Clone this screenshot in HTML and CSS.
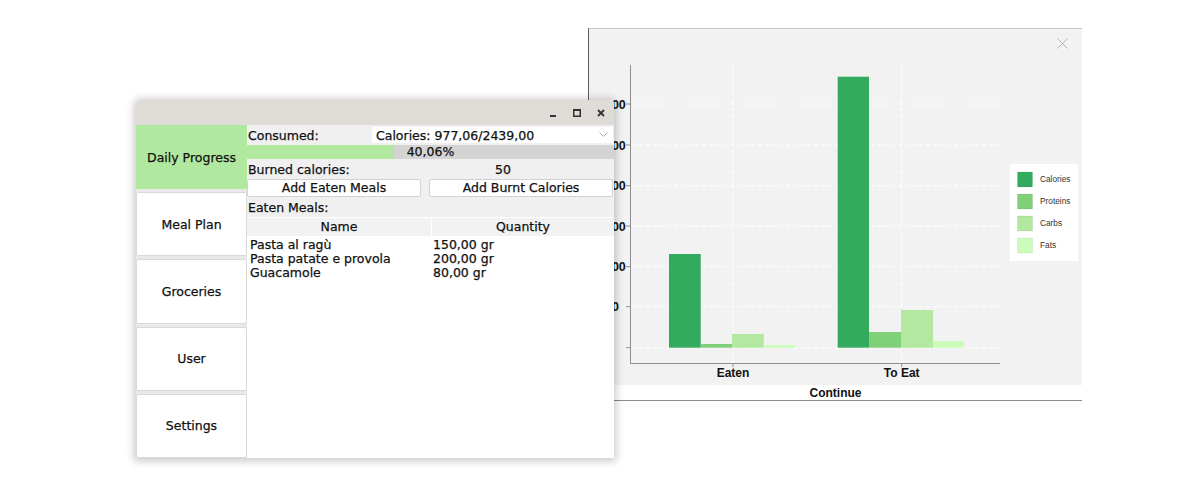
FILE: index.html
```html
<!DOCTYPE html>
<html>
<head>
<meta charset="utf-8">
<link rel="stylesheet" href="styles.css">
</head>
<body>
<div class="desk">
  <div class="chartwin">
    <div class="plot">
      <svg class="chart" width="493" height="356" viewBox="0 0 493 356">
        <g class="grid">
          <line x1="43" y1="75" x2="411" y2="75"/>
          <line x1="43" y1="116" x2="411" y2="116"/>
          <line x1="43" y1="156.7" x2="411" y2="156.7"/>
          <line x1="43" y1="197" x2="411" y2="197"/>
          <line x1="43" y1="237.7" x2="411" y2="237.7"/>
          <line x1="43" y1="277.7" x2="411" y2="277.7"/>
          <line x1="43" y1="318.7" x2="411" y2="318.7"/>
          <line x1="144" y1="36" x2="144" y2="334"/>
          <line x1="312.7" y1="36" x2="312.7" y2="334"/>
        </g>
        <g class="axis">
          <line x1="41.5" y1="36" x2="41.5" y2="334"/>
          <line x1="41" y1="334.5" x2="411" y2="334.5"/>
          <line x1="37" y1="75" x2="41" y2="75"/>
          <line x1="37" y1="116" x2="41" y2="116"/>
          <line x1="37" y1="156.7" x2="41" y2="156.7"/>
          <line x1="37" y1="197" x2="41" y2="197"/>
          <line x1="37" y1="237.7" x2="41" y2="237.7"/>
          <line x1="37" y1="277.7" x2="41" y2="277.7"/>
          <line x1="37" y1="318.7" x2="41" y2="318.7"/>
          <line x1="144" y1="335" x2="144" y2="338"/>
          <line x1="312.7" y1="335" x2="312.7" y2="338"/>
        </g>
        <g class="ylab">
          <text x="9" y="79.5">3000</text>
          <text x="9" y="120.5">2500</text>
          <text x="9" y="161">2000</text>
          <text x="9" y="201.5">1500</text>
          <text x="9" y="242">1000</text>
          <text x="9" y="282">500</text>
          <text x="9" y="323">0</text>
        </g>
        <rect class="c1" x="80" y="225" width="31.7" height="93.7"/>
        <rect class="c2" x="111.7" y="315" width="31.3" height="3.7"/>
        <rect class="c3" x="143" y="305" width="31.7" height="13.7"/>
        <rect class="c4" x="174.7" y="316" width="31.3" height="2.7"/>
        <rect class="c1" x="248.7" y="47.7" width="31.3" height="271"/>
        <rect class="c2" x="280" y="303" width="32" height="15.7"/>
        <rect class="c3" x="312" y="281" width="32" height="37.7"/>
        <rect class="c4" x="344" y="312" width="31" height="6.7"/>
        <text class="xlab" x="144" y="348">Eaten</text>
        <text class="xlab" x="312.7" y="348">To Eat</text>
        <rect class="legend" x="421" y="135" width="68" height="97"/>
        <rect class="c1 sw" x="428.5" y="143" width="15" height="15"/>
        <rect class="c2 sw" x="428.5" y="165" width="15" height="15"/>
        <rect class="c3 sw" x="428.5" y="187" width="15" height="15"/>
        <rect class="c4 sw" x="428.5" y="209" width="15" height="15"/>
        <text class="ltext" x="451" y="153">Calories</text>
        <text class="ltext" x="451" y="175">Proteins</text>
        <text class="ltext" x="451" y="197">Carbs</text>
        <text class="ltext" x="451" y="219">Fats</text>
        <g class="closex">
          <line x1="468.5" y1="9.5" x2="478.5" y2="19.5"/>
          <line x1="478.5" y1="9.5" x2="468.5" y2="19.5"/>
        </g>
      </svg>
    </div>
    <div class="footer">Continue</div>
  </div>

  <div class="appwin">
    <div class="titlebar">
      <span class="tbtn">
        <svg width="10" height="10" viewBox="0 0 10 10"><rect x="2" y="7" width="6" height="2" fill="#333"/></svg>
      </span>
      <span class="tbtn">
        <svg width="10" height="10" viewBox="0 0 10 10"><rect x="1.75" y="1.75" width="6.5" height="6.5" fill="none" stroke="#333" stroke-width="1.5"/><rect x="1" y="1" width="8" height="2" fill="#333"/></svg>
      </span>
      <span class="tbtn">
        <svg width="10" height="10" viewBox="0 0 10 10"><path d="M2 2 L8 8 M8 2 L2 8" stroke="#333" stroke-width="1.8"/></svg>
      </span>
    </div>
    <div class="winbody">
      <div class="sidebar">
        <div class="navitem active">Daily Progress</div>
        <div class="navitem">Meal Plan</div>
        <div class="navitem">Groceries</div>
        <div class="navitem">User</div>
        <div class="navitem">Settings</div>
      </div>
      <div class="content">
        <div class="row consumed">
          <span class="label">Consumed:</span>
          <div class="combo">
            <span>Calories: 977,06/2439,00</span>
            <svg class="chev" width="9" height="6" viewBox="0 0 9 6"><path d="M0.5 0.5 L4.5 4.5 L8.5 0.5" fill="none" stroke="#aaa" stroke-width="1"/></svg>
          </div>
        </div>
        <div class="progress">
          <div class="fill" style="width:40.06%"></div>
          <span class="ptext">40,06%</span>
        </div>
        <div class="row burned">
          <span class="label">Burned calories:</span>
          <span class="value">50</span>
        </div>
        <div class="buttons">
          <button class="btn eaten">Add Eaten Meals</button>
          <button class="btn burnt">Add Burnt Calories</button>
        </div>
        <div class="row">
          <span class="label">Eaten Meals:</span>
        </div>
        <div class="table">
          <div class="thead">
            <div class="th">Name</div>
            <div class="th">Quantity</div>
          </div>
          <div class="tr"><div class="td">Pasta al ragù</div><div class="td">150,00 gr</div></div>
          <div class="tr"><div class="td">Pasta patate e provola</div><div class="td">200,00 gr</div></div>
          <div class="tr"><div class="td">Guacamole</div><div class="td">80,00 gr</div></div>
        </div>
      </div>
    </div>
  </div>
</div>
</body>
</html>
```
FILE: styles.css
```css
html, body {
  margin: 0;
  padding: 0;
  background: #ffffff;
}
.desk {
  position: relative;
  width: 1177px;
  height: 488px;
  overflow: hidden;
}

/* ---------- chart window (behind) ---------- */
.chartwin {
  position: absolute;
  left: 588px;
  top: 28px;
  width: 494px;
  height: 373px;
  box-sizing: border-box;
  border-top: 1px solid #c6c6c6;
  border-left: 1px solid #5c5c5c;
  border-bottom: 1px solid #8c8c8c;
  display: flex;
  flex-direction: column;
}
.plot {
  height: 356px;
  background: #f2f2f2;
}
.chart { display: block; }
.grid line {
  stroke: #ffffff;
  stroke-width: 1;
  stroke-dasharray: 4 3;
}
.axis line {
  stroke: #8f8f8f;
  stroke-width: 1;
}
.ylab text {
  font-family: "Liberation Sans", Arial, sans-serif;
  font-weight: bold;
  font-size: 12.5px;
  fill: #111;
}
.xlab {
  font-family: "Liberation Sans", Arial, sans-serif;
  font-weight: bold;
  font-size: 12px;
  fill: #111;
  text-anchor: middle;
}
.c1 { fill: #33ab5f; }
.c2 { fill: #80cf79; }
.c3 { fill: #b2e89f; }
.c4 { fill: #cbfcba; }
.sw { stroke: rgba(0,0,0,0.06); stroke-width: 1; }
.legend { fill: #ffffff; }
.ltext {
  font-family: "Liberation Sans", Arial, sans-serif;
  font-size: 8.3px;
  fill: #333;
}
.closex line {
  stroke: #b5b5b5;
  stroke-width: 1;
}
.footer {
  height: 15px;
  background: #ffffff;
  text-align: center;
  font-family: "Liberation Sans", Arial, sans-serif;
  font-weight: bold;
  font-size: 12px;
  line-height: 17px;
  color: #111;
}

/* ---------- app window (front) ---------- */
.appwin {
  position: absolute;
  left: 136px;
  top: 100px;
  width: 478px;
  height: 358px;
  background: #ffffff;
  border-radius: 4px 4px 0 0;
  box-shadow: 0 1px 8px 2px rgba(0,0,0,0.22);
  display: flex;
  flex-direction: column;
  font-family: "DejaVu Sans", Verdana, sans-serif;
  font-size: 12.5px;
  color: #111;
  -webkit-text-stroke: 0.25px #111;
  overflow: hidden;
}
.titlebar {
  height: 25px;
  flex: none;
  background: #dfdcd8;
  display: flex;
  justify-content: flex-end;
  align-items: center;
  gap: 14px;
  padding-right: 8px;
  box-sizing: border-box;
  border-radius: 4px 4px 0 0;
}
.tbtn {
  width: 10px;
  height: 10px;
  display: flex;
}
.winbody {
  flex: 1;
  display: flex;
  min-height: 0;
}
.sidebar {
  width: 111px;
  flex: none;
  display: flex;
  flex-direction: column;
  gap: 3px;
  background: #e9e9e9;
}
.navitem {
  flex: 1;
  display: flex;
  align-items: center;
  justify-content: center;
  background: #ffffff;
  border: 1px solid #d9d9d9;
  border-radius: 2px;
  box-sizing: border-box;
}
.navitem.active {
  background: #b1e89f;
  border-color: #b1e89f;
  border-radius: 0;
}
.content {
  flex: 1;
  display: flex;
  flex-direction: column;
  background: #ffffff;
  min-width: 0;
}
.row {
  height: 19px;
  background: #f0f0f0;
  display: flex;
  align-items: center;
  padding-left: 1px;
}
.row.consumed {
  height: 20px;
  display: grid;
  grid-template-columns: 124px 1fr;
  align-items: center;
}
.combo {
  height: 16px;
  background: #ffffff;
  display: flex;
  align-items: center;
  justify-content: space-between;
  padding: 0 5px 0 4px;
  margin-right: 1px;
}
.chev { display: block; }
.progress {
  position: relative;
  height: 14px;
  background: #d4d4d4;
  display: flex;
  align-items: center;
  justify-content: center;
}
.fill {
  position: absolute;
  left: 0;
  top: 0;
  bottom: 0;
  background: #b1e89f;
}
.ptext {
  position: relative;
  line-height: 14px;
}
.row.burned {
  height: 20px;
  display: grid;
  grid-template-columns: 144px 1fr;
}
.value { text-align: center; }
.buttons {
  height: 19px;
  background: #f0f0f0;
  display: grid;
  grid-template-columns: 174px 1fr;
  column-gap: 8px;
  padding: 0 1px 1px 0;
  box-sizing: border-box;
}
.btn {
  font: inherit;
  color: #111;
  background: #ffffff;
  border: 1px solid #d2d2d2;
  border-radius: 2px;
  padding: 0;
  margin: 0;
  height: 18px;
  line-height: 16px;
}
.table {
  flex: 1;
  background: #ffffff;
  display: flex;
  flex-direction: column;
}
.thead {
  display: grid;
  grid-template-columns: 184px 1fr;
  height: 18px;
  background: #f2f2f2;
  border-top: 1px solid #ffffff;
  border-bottom: 1px solid #ffffff;
  margin-bottom: 1px;
}
.th {
  text-align: center;
  line-height: 18px;
}
.th + .th { border-left: 1px solid #ffffff; }
.tr {
  display: grid;
  grid-template-columns: 184px 1fr;
  height: 14px;
  line-height: 14px;
}
.td { padding-left: 3px; }
.td + .td { padding-left: 2px; }
```
